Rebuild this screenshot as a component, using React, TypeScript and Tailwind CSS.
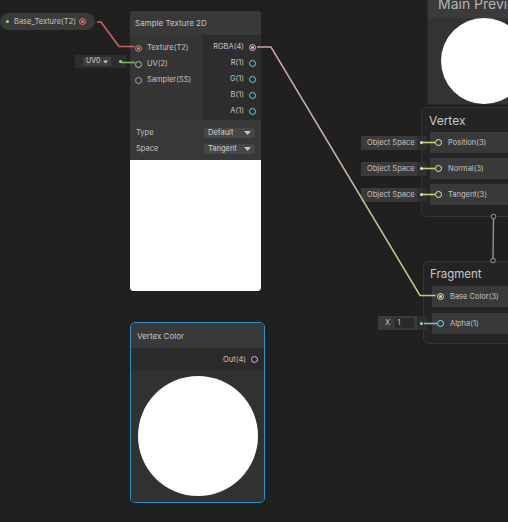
import React from "react"

const FONT = { fontFamily: "Inter, 'Noto Sans', sans-serif" }

function Ring({ ring, fill }: { ring: string; fill?: string }) {
  return (
    <span className={`w-[7px] h-[7px] rounded-full border flex items-center justify-center shrink-0 ${ring}`}>
      {fill && <span className={`w-[3px] h-[3px] rounded-full ${fill}`} />}
    </span>
  )
}

function Caret({ w = 7 }: { w?: number }) {
  return (
    <svg width={w} height="4" viewBox="0 0 7 4" className="shrink-0">
      <polygon points="0,0 7,0 3.5,4" fill="#c8c8c8" />
    </svg>
  )
}

function Dropdown({ label }: { label: string }) {
  return (
    <div className="w-[51px] h-[10px] bg-[#474747] rounded-[2px] flex items-center justify-between pl-[4px] pr-[4px] text-[7.5px] text-[#cfcfcf]">
      <span>{label}</span>
      <Caret />
    </div>
  )
}

function SampleTexture() {
  const left = [
    { name: "Texture(T2)", ring: "border-[#e07a7a]", fill: "bg-[#e07a7a]" },
    { name: "UV(2)", ring: "border-[#8fd38a]" },
    { name: "Sampler(SS)", ring: "border-[#a8a8a8]" },
  ]
  const right = [
    { name: "RGBA(4)", ring: "border-[#e4b6dc]", fill: "bg-[#e4b6dc]" },
    { name: "R(1)", ring: "border-[#6fcfd2]" },
    { name: "G(1)", ring: "border-[#6fcfd2]" },
    { name: "B(1)", ring: "border-[#6fcfd2]" },
    { name: "A(1)", ring: "border-[#6fcfd2]" },
  ]
  return (
    <div className="absolute left-[130px] top-[11px] w-[131px] h-[280px] flex flex-col rounded-[3px] overflow-hidden">
      <div className="h-[24px] bg-[#393939] flex items-center px-[5px] text-[8px] text-[#c4c4c4]">
        Sample Texture 2D
      </div>
      <div className="h-[85px] flex">
        <div className="w-[72px] bg-[#353535] pt-[5px] pl-[5px] flex flex-col">
          {left.map((p) => (
            <div key={p.name} className="h-[16px] flex items-center gap-[5px] text-[7.5px] text-[#c4c4c4]">
              <Ring ring={p.ring} fill={p.fill} />
              <span>{p.name}</span>
            </div>
          ))}
        </div>
        <div className="flex-1 bg-[#2d2d2d] pt-[4px] pr-[5px] flex flex-col items-end">
          {right.map((p) => (
            <div key={p.name} className="h-[16px] flex items-center gap-[5px] text-[7.5px] text-[#c4c4c4]">
              <span>{p.name}</span>
              <Ring ring={p.ring} fill={p.fill} />
            </div>
          ))}
        </div>
      </div>
      <div className="h-[40px] bg-[#383838] pt-[5px] px-[6px] flex flex-col">
        <div className="h-[16px] flex items-center justify-between text-[7.5px] text-[#c4c4c4]">
          <span>Type</span>
          <Dropdown label="Default" />
        </div>
        <div className="h-[16px] flex items-center justify-between text-[7.5px] text-[#c4c4c4]">
          <span>Space</span>
          <Dropdown label="Tangent" />
        </div>
      </div>
      <div className="flex-1 bg-white rounded-b-[3px]" />
    </div>
  )
}

function PortRow({ name, ring, fill }: { name: string; ring: string; fill?: string }) {
  return (
    <div className="h-[21px] bg-[#393939] flex items-center gap-[6px] pl-[5px] text-[7.5px] text-[#c4c4c4]">
      <Ring ring={ring} fill={fill} />
      <span>{name}</span>
    </div>
  )
}

function ObjectSpace() {
  return (
    <div className="h-[21px] flex items-center">
      <div className="w-[66px] h-[14px] bg-[#2f2f2f] flex items-center">
        <span className="w-[56px] h-full bg-[#3a3a3a] flex items-center pl-[6px] text-[7.5px] text-[#c4c4c4]">Object Space</span>
        <span className="ml-[3px] w-[3px] h-[3px] rounded-full bg-[#f0f59a]" />
      </div>
    </div>
  )
}

export default function App() {
  return (
    <div className="relative w-[508px] h-[522px] bg-[#202020] overflow-hidden" style={FONT}>
      {/* Main preview */}
      <div className="absolute left-[427px] top-[-12px] w-[114px] h-[117px] flex flex-col rounded-[4px] overflow-hidden border border-[#2a2a2a]">
        <div className="h-[31px] bg-[#3b3b3b] flex items-center pl-[10px] text-[14px] text-[#b4b4b4]">Main Preview</div>
        <div className="flex-1 bg-[#333333] flex items-center justify-center">
          <div className="w-[86px] h-[86px] rounded-full bg-white" />
        </div>
      </div>

      {/* Base texture property */}
      <div className="absolute left-0 top-[13px] w-[95px] h-[17px] rounded-full bg-[#3a3a3a] flex items-center pl-[6px] pr-[9px] text-[7.5px] text-[#c4c4c4]">
        <span className="w-[3px] h-[3px] rounded-full bg-[#8fe08a]" />
        <span className="ml-[5px] flex-1">Base_Texture(T2)</span>
        <Ring ring="border-[#e07a7a]" fill="bg-[#e07a7a]" />
      </div>

      {/* UV0 input */}
      <div className="absolute left-[75px] top-[55px] w-[51px] h-[13px] bg-[#2e2e2e] flex items-center pl-[8px]">
        <div className="w-[28px] h-[9px] bg-[#3f3f3f] flex items-center justify-between pl-[3px] pr-[3px] text-[7px] text-[#cfcfcf]">
          <span>UV0</span>
          <Caret w={5} />
        </div>
        <span className="ml-[8px] w-[3px] h-[3px] rounded-full bg-[#8fe08a]" />
      </div>

      <SampleTexture />

      {/* Vertex block */}
      <div className="absolute left-[421px] top-[107px] w-[120px] h-[110px] rounded-[6px] border border-[#343434] bg-[#242424] flex flex-col pl-[8px]">
        <div className="h-[24px] flex items-center text-[12px] text-[#c8c8c8] pt-[2px]">
          <span className="-ml-[1px]">Vertex</span>
        </div>
        <div className="flex flex-col gap-[5px]">
          <PortRow name="Position(3)" ring="border-[#e8ee8e]" />
          <PortRow name="Normal(3)" ring="border-[#e8ee8e]" />
          <PortRow name="Tangent(3)" ring="border-[#e8ee8e]" />
        </div>
      </div>
      <div className="absolute left-[361px] top-[132px] flex flex-col gap-[5px]">
        <ObjectSpace />
        <ObjectSpace />
        <ObjectSpace />
      </div>

      {/* Fragment block */}
      <div className="absolute left-[423px] top-[261px] w-[120px] h-[83px] rounded-[6px] border border-[#343434] bg-[#242424] flex flex-col pl-[8px]">
        <div className="h-[24px] flex items-center text-[11.5px] text-[#c8c8c8] pt-[2px]">
          <span className="-ml-[2px]">Fragment</span>
        </div>
        <div className="flex flex-col gap-[6px]">
          <PortRow name="Base Color(3)" ring="border-[#e8ee8e]" fill="bg-[#e8ee8e]" />
          <PortRow name="Alpha(1)" ring="border-[#84e4e7]" />
        </div>
      </div>
      <div className="absolute left-[378px] top-[316px] w-[49px] h-[14px] bg-[#2f2f2f] flex items-center">
        <div className="w-[39px] h-full bg-[#3a3a3a] flex items-center pl-[7px] gap-[5px] text-[7.5px] text-[#c4c4c4]">
          <span>X</span>
          <span className="w-[19px] h-[10px] bg-[#2a2a2a] flex items-center pl-[2px]">1</span>
        </div>
        <span className="ml-[3px] w-[3px] h-[3px] rounded-full bg-[#84e4e7]" />
      </div>

      {/* Vertex color node */}
      <div className="absolute left-[130px] top-[322px] w-[135px] h-[181px] rounded-[5px] border border-[#2e8fcb] overflow-hidden flex flex-col">
        <div className="h-[25px] bg-[#393939] flex items-center pl-[6px] text-[8px] text-[#c4c4c4]">Vertex Color</div>
        <div className="h-[22px] bg-[#2b2b2b] flex items-center justify-end gap-[5px] pr-[6px] pt-[1px] text-[7.5px] text-[#c4c4c4]">
          <span>Out(4)</span>
          <Ring ring="border-[#e4b6dc]" />
        </div>
        <div className="flex-1 bg-[#313131] flex items-center justify-center">
          <div className="w-[120px] h-[120px] rounded-full bg-white" />
        </div>
      </div>

      {/* Wires */}
      <svg className="absolute inset-0 pointer-events-none" width="508" height="522" viewBox="0 0 508 522">
        <defs>
          <linearGradient id="rgbaWire" gradientUnits="userSpaceOnUse" x1="256" y1="47" x2="436" y2="296">
            <stop offset="0" stopColor="#c99bc4" />
            <stop offset="1" stopColor="#c6c878" />
          </linearGradient>
        </defs>
        <polyline points="97,22 101,22 119,46.5 134.5,46.5" fill="none" stroke="#c96464" strokeWidth="1.6" />
        <line x1="121" y1="62.5" x2="135" y2="62.5" stroke="#72b86d" strokeWidth="1.6" />
        <polyline points="257,47 271,47 420,295.5 435.5,295.5" fill="none" stroke="url(#rgbaWire)" strokeWidth="1.6" />
        <line x1="423" y1="142.5" x2="435" y2="142.5" stroke="#c8cc7c" strokeWidth="1.6" />
        <line x1="423" y1="168.5" x2="435" y2="168.5" stroke="#c8cc7c" strokeWidth="1.6" />
        <line x1="423" y1="194.5" x2="435" y2="194.5" stroke="#c8cc7c" strokeWidth="1.6" />
        <line x1="424" y1="323.5" x2="437" y2="323.5" stroke="#6cc4c7" strokeWidth="1.6" />
        <line x1="493.5" y1="219" x2="493" y2="258" stroke="#9a9a9a" strokeWidth="1.3" />
        <circle cx="493.5" cy="216.5" r="2.3" fill="#202020" stroke="#a0a0a0" strokeWidth="1" />
        <circle cx="493" cy="260.5" r="2.3" fill="#202020" stroke="#a0a0a0" strokeWidth="1" />
      </svg>
    </div>
  )
}
